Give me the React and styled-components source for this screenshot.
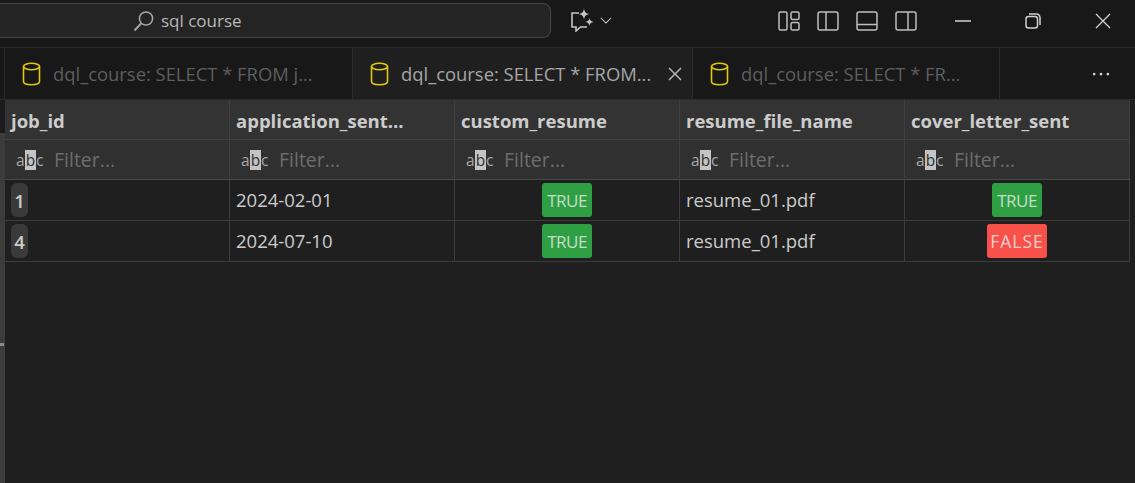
import React from "react";
import styled, { createGlobalStyle } from "styled-components";
import { VscChevronDown, VscClose, VscEllipsis } from "react-icons/vsc";

const GlobalStyle = createGlobalStyle`
  html, body {
    margin: 0;
    height: 100%;
    background: #1f1f1f;
    overflow: hidden;
  }
  #root {
    height: 100%;
  }
`;

const Page = styled.div`
  height: 483px;
  display: flex;
  flex-direction: column;
  font-family: "Open Sans", "Noto Sans", sans-serif;
`;

const TitleBar = styled.div`
  height: 47px;
  flex: none;
  display: flex;
  background: #181818;
  border-bottom: 1px solid #2b2b2b;
`;

const CommandCenter = styled.div`
  width: 417px;
  height: 33px;
  margin-top: 3px;
  padding-left: 133px;
  flex: none;
  display: flex;
  align-items: center;
  gap: 7px;
  background: #242424;
  border: 1px solid #474747;
  border-left: 0;
  border-radius: 0 8px 8px 0;
  color: #b8b8b8;
  font-size: 17px;
`;

const CopilotButton = styled.div`
  margin: 8px 0 0 20px;
  height: 24px;
  display: flex;
  align-items: center;
  gap: 3px;
  color: #c4c4c4;
`;

const LayoutIcons = styled.div`
  margin: 10px 0 0 163px;
  height: 22px;
  display: flex;
  gap: 17px;
  color: #bdbdbd;
`;

const WindowControls = styled.div`
  margin-left: 11px;
  display: flex;
  color: #d0d0d0;
`;

const WindowButton = styled.div`
  width: 70px;
  height: 41px;
  display: flex;
  align-items: center;
  justify-content: center;
`;

const TabBar = styled.div`
  height: 52px;
  flex: none;
  display: flex;
  background: #181818;
  border-bottom: 1px solid #2b2b2b;
  box-sizing: border-box;
`;

const TabGutter = styled.div`
  width: 5px;
  flex: none;
  border-right: 1px solid #2b2b2b;
  box-sizing: border-box;
`;

const Tab = styled.div`
  width: ${(props) => props.$width}px;
  flex: none;
  box-sizing: border-box;
  padding-left: 17px;
  display: flex;
  align-items: center;
  gap: 12px;
  border-right: 1px solid #2b2b2b;
  background: ${(props) => (props.$active ? "#1f1f1f" : "#181818")};
  color: ${(props) => (props.$active ? "#a6a6a6" : "#5e5e5e")};
  font-size: 18.4px;
  white-space: nowrap;
`;

const TabClose = styled.span`
  margin-left: auto;
  margin-right: 10px;
  display: flex;
  color: #b5b5b5;
`;

const TabActions = styled.div`
  flex: 1;
  display: flex;
  align-items: center;
  justify-content: flex-end;
  padding-right: 23px;
  color: #d0d0d0;
`;

const Body = styled.div`
  flex: 1;
  display: flex;
  min-height: 0;
`;

const Sash = styled.div`
  width: 5px;
  flex: none;
  display: flex;
  flex-direction: column;
  box-sizing: border-box;
  padding-top: 33px;
  background: #1b1b1b;
`;

const SashThumb = styled.div`
  flex: 1;
  padding-top: 210px;
  background: #3c3c3c;
`;

const SashMark = styled.div`
  width: 4px;
  height: 3px;
  background: #8a8a8a;
`;

const Grid = styled.div`
  flex: none;
  align-self: flex-start;
  display: grid;
  grid-template-columns: repeat(5, 225px);
  width: 1130px;
  margin-right: -5px;
  color: #cccccc;
`;

const HeaderCell = styled.div`
  height: 40px;
  box-sizing: border-box;
  padding: 2px 0 0 6px;
  display: flex;
  align-items: center;
  background: #333333;
  border-right: 1px solid #3f3f3f;
  border-bottom: 1px solid #404040;
  font-size: 18.5px;
  font-weight: 700;
  white-space: nowrap;
`;

const FilterCell = styled.div`
  height: 40px;
  box-sizing: border-box;
  padding-left: 11px;
  display: flex;
  align-items: center;
  gap: 11px;
  background: #303030;
  border-right: 1px solid #3f3f3f;
  border-bottom: 1px solid #4a4a4a;
  color: #6d6d6d;
  font-size: 19.5px;
`;

const AbcIcon = styled.span`
  display: flex;
  align-items: center;
  width: 27px;
  color: #a8a8a8;
  font-size: 15.5px;
  line-height: 20px;
`;

const AbcMiddle = styled.span`
  padding: 0 1px;
  background: #c4c4c4;
  color: #303030;
`;

const Cell = styled.div`
  height: 41px;
  box-sizing: border-box;
  padding-left: ${(props) => (props.$center ? 0 : 6)}px;
  display: flex;
  align-items: center;
  justify-content: ${(props) => (props.$center ? "center" : "flex-start")};
  background: #1f1f1f;
  border-right: 1px solid #3c3c3c;
  border-bottom: 1px solid #3c3c3c;
  font-size: 18.500px;
`;

const CellText = styled.span`
  margin-top: -2px;
`;

const IdPill = styled.span`
  width: 17px;
  height: 34px;
  display: flex;
  align-items: center;
  justify-content: center;
  background: #3a3a3a;
  border-radius: 6px;
  font-weight: 600;
`;

const BoolBadge = styled.span`
  width: ${(props) => (props.$value ? 50 : 60)}px;
  height: 34px;
  display: flex;
  align-items: center;
  justify-content: center;
  border-radius: 3px;
  background: ${(props) => (props.$value ? "#2ea043" : "#f85149")};
  color: ${(props) => (props.$value ? "#c7dcc9" : "#f4cfcc")};
  font-size: ${(props) => (props.$value ? 17 : 17.5)}px;
  letter-spacing: ${(props) => (props.$value ? -0.5 : 1)}px;
`;

const Line = ({ size = 22, children }) => (
  <svg width={size} height={size} viewBox="0 0 22 22" fill="none" stroke="currentColor" strokeWidth="1.5">
    {children}
  </svg>
);

const SearchIcon = () => (
  <svg width="21" height="22" viewBox="0 0 21 22" fill="none" stroke="#a8a8a8" strokeWidth="1.5">
    <circle cx="13" cy="8.5" r="6.6" />
    <path d="M8.2 13.4 1.5 20.5" strokeWidth="2" />
  </svg>
);

const CopilotIcon = () => (
  <svg width="23" height="24" viewBox="0 0 23 24" fill="none" stroke="currentColor" strokeWidth="1.6">
    <path d="M8 5H1v14h4v4l4.500-4H16" />
    <path d="M13 0.500c.6 3.600 1.700 4.900 5.500 5.500-3.800.7-4.900 2-5.500 5.500-.6-3.500-1.700-4.800-5.500-5.500 3.800-.6 4.900-1.900 5.500-5.500z" fill="currentColor" stroke="none" />
    <path d="M18.500 10c.4 2.400 1.100 3.200 4 4-2.900.6-3.600 1.500-4 4-.4-2.500-1.100-3.400-4-4 2.900-.8 3.600-1.600 4-4z" fill="currentColor" stroke="none" />
  </svg>
);

const DbIcon = () => (
  <svg width="19" height="24" viewBox="0 0 19 24" fill="none" stroke="#e2c80f" strokeWidth="1.6" style={{ flex: "none" }}>
    <ellipse cx="9.500" cy="4.500" rx="8" ry="3.200" />
    <path d="M1.500 4.500v15c0 1.900 3.600 3.200 8 3.200s8-1.300 8-3.200v-15" />
  </svg>
);

const columns = ["job_id", "application_sent...", "custom_resume", "resume_file_name", "cover_letter_sent"];

const rows = [
  { id: 1, date: "2024-02-01", custom: true, file: "resume_01.pdf", cover: true },
  { id: 4, date: "2024-07-10", custom: true, file: "resume_01.pdf", cover: false },
];

const tabs = [
  { label: "dql_course: SELECT * FROM j...", width: 348 },
  { label: "dql_course: SELECT * FROM...", width: 340, active: true },
  { label: "dql_course: SELECT * FR...", width: 307 },
];

const Bool = ({ value }) => <BoolBadge $value={value}>{value ? "TRUE" : "FALSE"}</BoolBadge>;

const App = () => {
  return (
    <Page>
      <GlobalStyle />
      <TitleBar>
        <CommandCenter>
          <SearchIcon />
          sql course
        </CommandCenter>
        <CopilotButton>
          <CopilotIcon />
          <VscChevronDown size={18} />
        </CopilotButton>
        <LayoutIcons>
          <Line>
            <rect x="1" y="2" width="8" height="18" rx="1.500" />
            <rect x="13" y="2" width="8" height="7.500" rx="1.500" />
            <rect x="13" y="12.500" width="8" height="7.500" rx="1.500" />
          </Line>
          <Line>
            <rect x="1" y="2" width="20" height="18" rx="2" />
            <path d="M9 2v18" />
          </Line>
          <Line>
            <rect x="1" y="2" width="20" height="18" rx="2" />
            <path d="M1 14.500h20" />
          </Line>
          <Line>
            <rect x="1" y="2" width="20" height="18" rx="2" />
            <path d="M13 2v18" />
          </Line>
        </LayoutIcons>
        <WindowControls>
          <WindowButton>
            <svg width="16" height="16" viewBox="0 0 16 16" stroke="currentColor" strokeWidth="1.500">
              <path d="M0 8h16" />
            </svg>
          </WindowButton>
          <WindowButton>
            <svg width="16" height="16" viewBox="0 0 16 16" fill="none" stroke="currentColor" strokeWidth="1.500">
              <rect x="1" y="3.500" width="11.500" height="11.500" rx="2.500" />
              <path d="M4 1h7.500A3.500 3.500 0 0 1 15 4.500V12" />
            </svg>
          </WindowButton>
          <WindowButton>
            <svg width="16" height="16" viewBox="0 0 16 16" stroke="currentColor" strokeWidth="1.300">
              <path d="M1 1l14 14M15 1 1 15" />
            </svg>
          </WindowButton>
        </WindowControls>
      </TitleBar>
      <TabBar>
        <TabGutter />
        {tabs.map((tab) => (
          <Tab key={tab.label} $width={tab.width} $active={tab.active}>
            <DbIcon />
            {tab.label}
            {tab.active && (
              <TabClose>
                <VscClose size={24} />
              </TabClose>
            )}
          </Tab>
        ))}
        <TabActions>
          <VscEllipsis size={22} />
        </TabActions>
      </TabBar>
      <Body>
        <Sash>
          <SashThumb>
            <SashMark />
          </SashThumb>
        </Sash>
        <Grid>
          {columns.map((name) => (
            <HeaderCell key={name}>{name}</HeaderCell>
          ))}
          {columns.map((name) => (
            <FilterCell key={name}>
              <AbcIcon>
                a<AbcMiddle>b</AbcMiddle>c
              </AbcIcon>
              Filter...
            </FilterCell>
          ))}
          {rows.map((row) => (
            <React.Fragment key={row.id}>
              <Cell>
                <IdPill>{row.id}</IdPill>
              </Cell>
              <Cell>
                <CellText>{row.date}</CellText>
              </Cell>
              <Cell $center>
                <Bool value={row.custom} />
              </Cell>
              <Cell>
                <CellText>{row.file}</CellText>
              </Cell>
              <Cell $center>
                <Bool value={row.cover} />
              </Cell>
            </React.Fragment>
          ))}
        </Grid>
      </Body>
    </Page>
  );
};

export default App;
